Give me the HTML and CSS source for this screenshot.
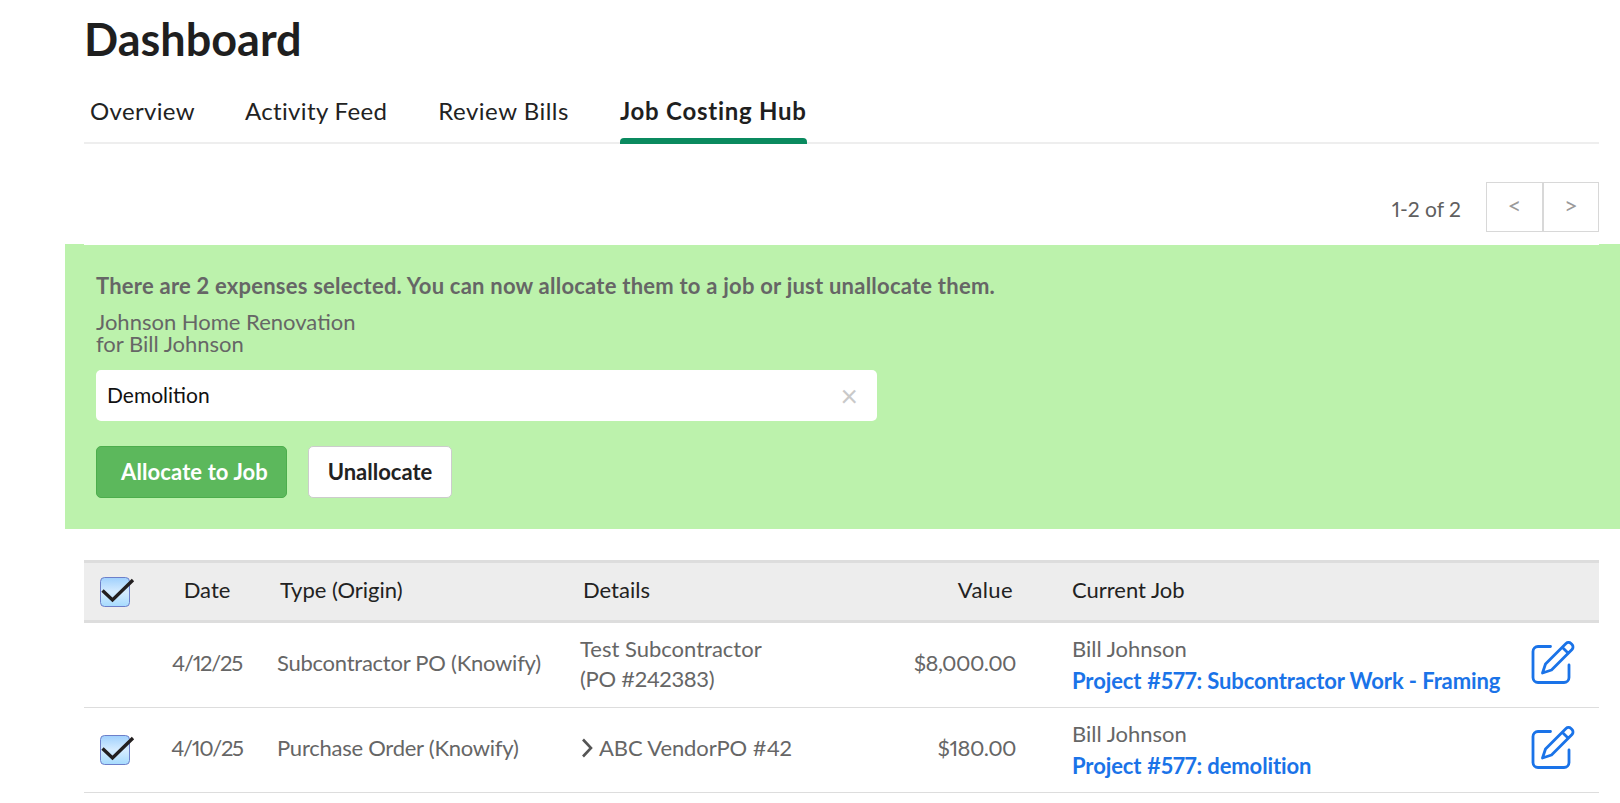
FILE: index.html
```html
<!DOCTYPE html>
<html lang="en">
<head>
<meta charset="utf-8">
<title>Dashboard</title>
<link rel="stylesheet" href="styles.css">
</head>
<body>
<main class="page">
  <h1 class="title">Dashboard</h1>
  <nav class="tabs">
    <a class="tab t1">Overview</a>
    <a class="tab t2">Activity Feed</a>
    <a class="tab t3">Review Bills</a>
    <a class="tab active">Job Costing Hub</a>
  </nav>
  <div class="pager">
    <span class="count">1-2 of 2</span>
    <div class="pager-btns">
      <button class="pbtn">&lt;</button>
      <button class="pbtn second">&gt;</button>
    </div>
  </div>
  <section class="panel">
    <p class="msg">There are 2 expenses selected. You can now allocate them to a job or just unallocate them.</p>
    <p class="job">Johnson Home Renovation<br>for Bill Johnson</p>
    <div class="input"><span>Demolition</span><span class="clear">×</span></div>
    <div class="actions">
      <button class="btn primary">Allocate to Job</button>
      <button class="btn plain">Unallocate</button>
    </div>
  </section>
  <section class="grid">
    <div class="row head">
      <div class="cb"><svg class="check" viewBox="0 0 36 30"><defs><linearGradient id="g1" x1="0" y1="0" x2="0" y2="1"><stop offset="0" stop-color="#9fd0fd"/><stop offset=".5" stop-color="#d6ecff"/><stop offset="1" stop-color="#a6dbfe"/></linearGradient></defs><rect x="0.5" y="0.5" width="29" height="29" rx="4" fill="url(#g1)" stroke="#6d7fc9"/><path d="M2.500 13.500 12.500 23 33 3" fill="none" stroke="#231f20" stroke-width="3.400"/></svg></div>
      <div class="date">Date</div>
      <div class="type">Type (Origin)</div>
      <div class="details">Details</div>
      <div class="value">Value</div>
      <div class="cur">Current Job</div>
      <div></div>
    </div>
    <div class="row">
      <div class="cb"></div>
      <div class="date">4/12/25</div>
      <div class="type">Subcontractor PO (Knowify)</div>
      <div class="details">Test Subcontractor<br><span class="po">(PO #242383)</span></div>
      <div class="value">$8,000.00</div>
      <div class="cur"><div>Bill Johnson</div><a class="link">Project #577: Subcontractor Work - Framing</a></div>
      <div class="edit"><svg class="pen" viewBox="0 0 44 44"><path d="M20 5.500H7.500a5 5 0 0 0-5 5v26a5 5 0 0 0 5 5h26a5 5 0 0 0 5-5V24" fill="none" stroke="#1a73e8" stroke-width="2.800" stroke-linecap="round"/><path d="M35.500 2.500a3.600 3.600 0 0 1 5 0l1 1a3.600 3.600 0 0 1 0 5L21 29l-9 3 3-9ZM32 6.500l6.500 6.500" fill="none" stroke="#1a73e8" stroke-width="2.800" stroke-linejoin="round"/></svg></div>
    </div>
    <div class="row">
      <div class="cb"><svg class="check" viewBox="0 0 36 30"><rect x="0.5" y="0.5" width="29" height="29" rx="4" fill="url(#g1)" stroke="#6d7fc9"/><path d="M2.500 13.500 12.500 23 33 3" fill="none" stroke="#231f20" stroke-width="3.400"/></svg></div>
      <div class="date">4/10/25</div>
      <div class="type">Purchase Order (Knowify)</div>
      <div class="details chev"><svg class="chevron" viewBox="0 0 12 20"><path d="M2 1.500l8 8.500-8 8.500" fill="none" stroke="#555" stroke-width="2.600"/></svg>ABC VendorPO #42</div>
      <div class="value">$180.00</div>
      <div class="cur"><div>Bill Johnson</div><a class="link">Project #577: demolition</a></div>
      <div class="edit"><svg class="pen" viewBox="0 0 44 44"><path d="M20 5.500H7.500a5 5 0 0 0-5 5v26a5 5 0 0 0 5 5h26a5 5 0 0 0 5-5V24" fill="none" stroke="#1a73e8" stroke-width="2.800" stroke-linecap="round"/><path d="M35.500 2.500a3.600 3.600 0 0 1 5 0l1 1a3.600 3.600 0 0 1 0 5L21 29l-9 3 3-9ZM32 6.500l6.500 6.500" fill="none" stroke="#1a73e8" stroke-width="2.800" stroke-linejoin="round"/></svg></div>
    </div>
  </section>
</main>
</body>
</html>
```

FILE: styles.css
```css
* { box-sizing: border-box; }
html, body { margin: 0; background: #fff; }
body { font-family: Lato, "Liberation Sans", sans-serif; color: #666; font-size: 22px; font-variant-numeric: proportional-nums; height: 803px; overflow: hidden; }
.page { margin-left: 84px; width: 1515px; }
.title { margin: 0; padding-top: 14px; height: 80px; font-size: 45px; line-height: 50px; font-weight: 700; color: #1f1f1f; }
.tabs { display: flex; height: 64px; border-bottom: 2px solid #eeeeee; padding-left: 6px; color: #222; }
.tab { position: relative; font-size: 24px; line-height: 62px; height: 64px; letter-spacing: .35px; }
.t1 { margin-right: 50px; }
.t2 { margin-right: 51px; }
.t3 { margin-right: 51px; letter-spacing: .5px; }
.active { font-weight: 700; color: #1f1f1f; letter-spacing: .75px; }
.active::after { content: ""; position: absolute; left: 0; right: 0; bottom: 0; height: 6px; background: #0a8a5f; border-radius: 4px 4px 0 0; }
.pager { display: flex; justify-content: flex-end; align-items: center; height: 50px; margin-top: 38px; font-size: 21px; }
.count { margin-right: 25px; color: #5f5f5f; padding-top: 3px; }
.pager-btns { display: flex; }
.pbtn { width: 57px; height: 50px; background: #fff; border: 1px solid #d8d8d8; color: #9a9a9a; font: 24px/1 Lato, sans-serif; padding: 0 0 4px; }
.second { width: 56px; }
.panel { position: relative; margin: 12px -21px 0 -19px; height: 285px; background: #bcf2ac; padding: 28px 31px 0; }
.panel::before { content: ""; position: absolute; top: 0; left: 19px; right: 21px; height: 1px; background: #fff; }
.msg { margin: 0; font-size: 22px; line-height: 28px; font-weight: 700; letter-spacing: .23px; color: #666; }
.job { margin: 11px 0 0; font-size: 22px; line-height: 22px; color: #666; }
.input { display: flex; justify-content: space-between; align-items: center; margin-top: 15px; width: 781px; height: 51px; background: #fff; border-radius: 5px; padding: 0 19px 2px 11px; color: #111; font-size: 21px; }
.clear { font-size: 30px; color: #c9c9c9; line-height: 1; }
.actions { display: flex; gap: 21px; margin-top: 25px; }
.btn { height: 52px; border-radius: 5px; font: 700 22px/1 Lato, sans-serif; }
.primary { width: 191px; background: #5cb85c; border: 1px solid #4cae4c; color: #fff; padding-left: 12px; letter-spacing: .1px; }
.plain { width: 144px; background: #fff; border: 1px solid #ccc; color: #222; }
.grid { margin-top: 31px; }
.row { display: grid; grid-template-columns: 66px 114px 306px 230px 230px 485px 84px; align-items: center; height: 85px; border-bottom: 1px solid #ddd; }
.head { height: 63px; background: #ededed; border-top: 3px solid #ddd; border-bottom: 3px solid #ddd; color: #222; }
.cb { padding-left: 16px; display: flex; }
.check { width: 36px; height: 30px; display: block; }
.date { text-align: center; padding-bottom: 5px; letter-spacing: -1.25px; }
.type { padding: 0 0 5px 13px; letter-spacing: -.25px; }
.details { padding: 0 0 2px 10px; line-height: 30px; }
.po { letter-spacing: -.35px; }
.value { text-align: right; padding: 0 14px 5px 0; letter-spacing: -.55px; }
.cur { padding-left: 42px; line-height: 32px; }
.head .date { letter-spacing: 0; }
.head .type { padding: 0 0 4px 16px; letter-spacing: 0; }
.head .details { padding: 0 0 4px 13px; }
.head .value { padding: 0 17px 4px 0; letter-spacing: .4px; }
.head .cur { padding-bottom: 4px; }
.link { color: #1a73e8; font-weight: 700; letter-spacing: -.1px; }
.edit { display: flex; padding: 0 0 4px 15px; }
.pen { width: 45px; height: 44px; display: block; }
.chev { display: flex; align-items: center; letter-spacing: -.1px; padding-bottom: 5px; }
.chevron { width: 14px; height: 20px; margin-right: 5px; }
```
